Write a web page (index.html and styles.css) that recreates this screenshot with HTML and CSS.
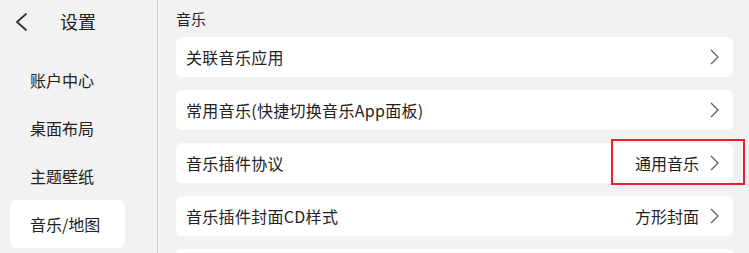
FILE: index.html
```html
<!DOCTYPE html>
<html lang="zh">
<head>
<meta charset="utf-8">
<link rel="stylesheet" href="styles.css">
</head>
<body>
<div class="app">
  <aside class="sidebar">
    <div class="header">
      <svg class="back" width="12" height="18" viewBox="0 0 12 18"><path d="M11 1 L2 9 L11 17" fill="none" stroke="#333" stroke-width="1.8" stroke-linecap="round" stroke-linejoin="round"/></svg>
      <span class="title">设置</span>
    </div>
    <nav class="nav">
      <div class="nav-item">账户中心</div>
      <div class="nav-item">桌面布局</div>
      <div class="nav-item">主题壁纸</div>
      <div class="nav-item active">音乐/地图</div>
    </nav>
  </aside>
  <main class="main">
    <div class="section-label">音乐</div>
    <div class="list">
      <div class="row"><span class="label">关联音乐应用</span><span class="right"><svg class="chev" width="9" height="16" viewBox="0 0 9 16"><path d="M1 1 L8 8 L1 15" fill="none" stroke="#5a5a5a" stroke-width="1.2"/></svg></span></div>
      <div class="row"><span class="label">常用音乐(快捷切换音乐App面板)</span><span class="right"><svg class="chev" width="9" height="16" viewBox="0 0 9 16"><path d="M1 1 L8 8 L1 15" fill="none" stroke="#5a5a5a" stroke-width="1.2"/></svg></span></div>
      <div class="row highlighted"><span class="label">音乐插件协议</span><span class="right"><span class="value">通用音乐</span><svg class="chev" width="9" height="16" viewBox="0 0 9 16"><path d="M1 1 L8 8 L1 15" fill="none" stroke="#5a5a5a" stroke-width="1.2"/></svg></span><div class="mark"></div></div>
      <div class="row"><span class="label">音乐插件封面CD样式</span><span class="right"><span class="value">方形封面</span><svg class="chev" width="9" height="16" viewBox="0 0 9 16"><path d="M1 1 L8 8 L1 15" fill="none" stroke="#5a5a5a" stroke-width="1.2"/></svg></span></div>
      <div class="row"></div>
    </div>
  </main>
</div>
</body>
</html>
```
FILE: styles.css
```css
* { box-sizing: border-box; }
html, body {
  margin: 0;
  padding: 0;
  width: 749px;
  height: 253px;
  overflow: hidden;
  background: #f2f2f2;
  font-family: "Noto Sans CJK SC", "Noto Sans", sans-serif;
  color: #222;
}
.app {
  display: flex;
  height: 253px;
  overflow: hidden;
}
.sidebar {
  width: 158px;
  flex: none;
  border-right: 1px solid #cdcdcd;
  background: #f2f2f2;
}
.header {
  height: 42px;
  display: flex;
  align-items: center;
  padding-left: 15px;
}
.back { flex: none; margin-top: 1px; }
.title {
  margin-left: 33px;
  font-size: 18px;
  line-height: 22px;
  color: #222;
}
.nav {
  padding-top: 14px;
  display: flex;
  flex-direction: column;
}
.nav-item {
  height: 48px;
  margin: 0 32px 0 10px;
  padding-left: 20px;
  display: flex;
  align-items: center;
  font-size: 16px;
  color: #222;
  border-radius: 7px;
}
.nav-item.active { background: #fff; }
.main {
  flex: 1;
  padding: 0 16px 0 18px;
  overflow: hidden;
}
.section-label {
  height: 37px;
  padding-top: 8px;
  font-size: 15px;
  line-height: 22px;
  color: #222;
}
.list {
  display: flex;
  flex-direction: column;
  gap: 13px;
}
.row {
  position: relative;
  height: 40px;
  flex: none;
  background: #fff;
  border-radius: 6px;
  display: flex;
  align-items: center;
  justify-content: space-between;
  padding: 0 14px 0 10px;
  font-size: 16px;
}
.label { letter-spacing: 0.3px; }
.right {
  display: flex;
  align-items: center;
}
.value {
  margin-right: 11px;
  color: #222;
}
.chev { display: block; }
.mark {
  position: absolute;
  left: 435px;
  top: -4px;
  width: 134px;
  height: 46px;
  border: 2px solid #e3222b;
}
```
